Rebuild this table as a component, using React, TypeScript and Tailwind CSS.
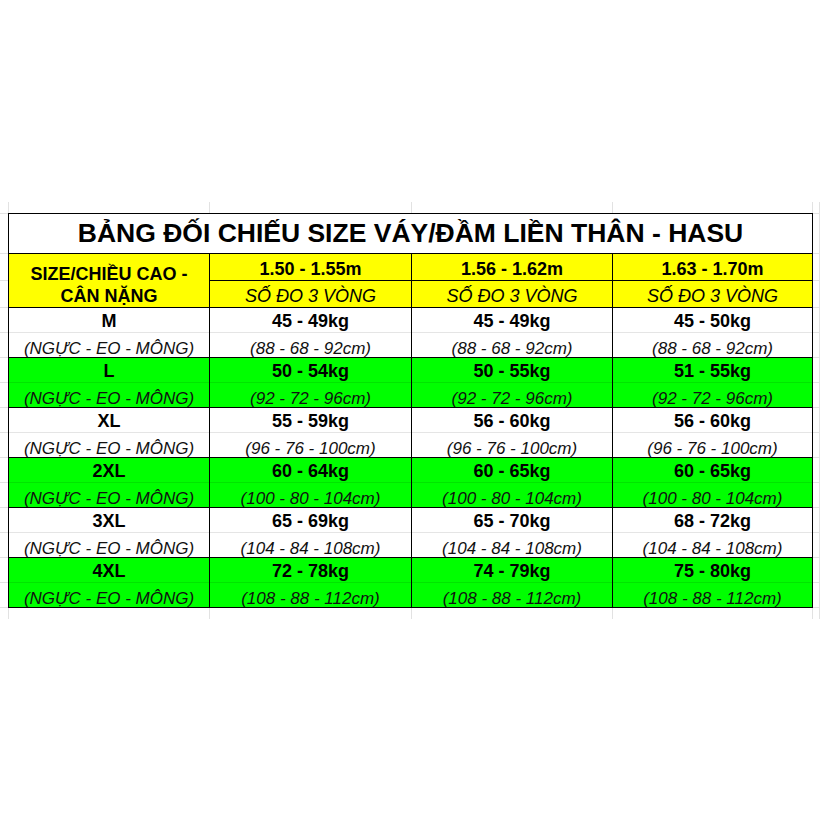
import React from "react";

type Row = { size: string; bg: string; cells: [string, string][] };

const rows: Row[] = [
  { size: "M", bg: "bg-white", cells: [["45 - 49kg", "(88 - 68 - 92cm)"], ["45 - 49kg", "(88 - 68 - 92cm)"], ["45 - 50kg", "(88 - 68 - 92cm)"]] },
  { size: "L", bg: "bg-[#00ff00]", cells: [["50 - 54kg", "(92 - 72 - 96cm)"], ["50 - 55kg", "(92 - 72 - 96cm)"], ["51 - 55kg", "(92 - 72 - 96cm)"]] },
  { size: "XL", bg: "bg-white", cells: [["55 - 59kg", "(96 - 76 - 100cm)"], ["56 - 60kg", "(96 - 76 - 100cm)"], ["56 - 60kg", "(96 - 76 - 100cm)"]] },
  { size: "2XL", bg: "bg-[#00ff00]", cells: [["60 - 64kg", "(100 - 80 - 104cm)"], ["60 - 65kg", "(100 - 80 - 104cm)"], ["60 - 65kg", "(100 - 80 - 104cm)"]] },
  { size: "3XL", bg: "bg-white", cells: [["65 - 69kg", "(104 - 84 - 108cm)"], ["65 - 70kg", "(104 - 84 - 108cm)"], ["68 - 72kg", "(104 - 84 - 108cm)"]] },
  { size: "4XL", bg: "bg-[#00ff00]", cells: [["72 - 78kg", "(108 - 88 - 112cm)"], ["74 - 79kg", "(108 - 88 - 112cm)"], ["75 - 80kg", "(108 - 88 - 112cm)"]] },
];

const heights = ["1.50 - 1.55m", "1.56 - 1.62m", "1.63 - 1.70m"];

function Cell({ top, bottom, last }: { top: string; bottom: string; last?: boolean }) {
  return (
    <div className={`flex flex-col ${last ? "" : "border-r border-black"}`}>
      <div className="h-[25px] border-b border-black/10 flex items-center justify-center pt-[3px] font-bold text-[18px] text-black whitespace-nowrap">
        {top}
      </div>
      <div className="flex-1 flex items-center justify-center pt-[3px] italic text-[17px] text-[#111] whitespace-nowrap">
        {bottom}
      </div>
    </div>
  );
}

function Band() {
  return (
    <div className="h-[11px] flex">
      <div className="w-[9px] border-r border-[#e2e2e2]" />
      <div className="w-[201px] border-r border-[#e2e2e2]" />
      <div className="w-[202px] border-r border-[#e2e2e2]" />
      <div className="w-[201px] border-r border-[#e2e2e2]" />
      <div className="w-[200px] border-r border-[#e2e2e2]" />
      <div className="w-[7px] border-r border-[#e2e2e2]" />
    </div>
  );
}

function Gutter() {
  return (
    <div className="w-[8px] flex flex-col">
      <div className="h-[1px] bg-[#e2e2e2]" />
      <div className="h-[40px] border-b border-[#e2e2e2]" />
      <div className="h-[27px] border-b border-[#e2e2e2]" />
      <div className="h-[27px] border-b border-[#e2e2e2]" />
      {Array.from({ length: 12 }).map((_, i) => (
        <div key={i} className="h-[25px] border-b border-[#e2e2e2]" />
      ))}
    </div>
  );
}

export default function App() {
  return (
    <div className="w-[820px] h-[820px] bg-white overflow-hidden font-['Liberation_Sans',Arial,sans-serif] text-black">
      <div className="pt-[202px] flex flex-col">
        <Band />
        <div className="flex">
          <Gutter />
          <div className="w-[805px] border border-black flex flex-col">
            <div className="h-[40px] border-b border-black bg-white flex items-center justify-center font-bold text-[26.5px] whitespace-nowrap">
              BẢNG ĐỐI CHIẾU SIZE VÁY/ĐẦM LIỀN THÂN - HASU
            </div>
            <div className="grid grid-cols-[201px_202px_201px_1fr] grid-rows-[27px_26px] border-b border-black bg-[#ffff00]">
              <div className="row-span-2 border-r border-black flex flex-col items-center justify-center pt-[10px] font-bold text-[18px] leading-[21.5px]">
                <div>SIZE/CHIỀU CAO -</div>
                <div>CÂN NẶNG</div>
              </div>
              {heights.map((h, i) => (
                <div
                  key={h}
                  className={`border-b border-black flex items-center justify-center pt-[5px] font-bold text-[18px] ${i < 2 ? "border-r" : ""}`}
                  style={{ gridColumn: i + 2, gridRow: 1 }}
                >
                  {h}
                </div>
              ))}
              {heights.map((h, i) => (
                <div
                  key={h + "s"}
                  className={`border-black flex items-center justify-center pt-[4px] italic text-[18px] ${i < 2 ? "border-r" : ""}`}
                  style={{ gridColumn: i + 2, gridRow: 2 }}
                >
                  SỐ ĐO 3 VÒNG
                </div>
              ))}
            </div>
            {rows.map((r, idx) => (
              <div
                key={r.size}
                className={`grid grid-cols-[201px_202px_201px_1fr] ${r.bg} ${idx < rows.length - 1 ? "h-[50px] border-b border-black" : "h-[49px]"}`}
              >
                <Cell top={r.size} bottom="(NGỰC - EO - MÔNG)" />
                {r.cells.map((c, i) => (
                  <Cell key={i} top={c[0]} bottom={c[1]} last={i === 2} />
                ))}
              </div>
            ))}
          </div>
          <div className="w-[7px] border-r border-[#e2e2e2]">
            <Gutter />
          </div>
        </div>
        <Band />
      </div>
    </div>
  );
}
